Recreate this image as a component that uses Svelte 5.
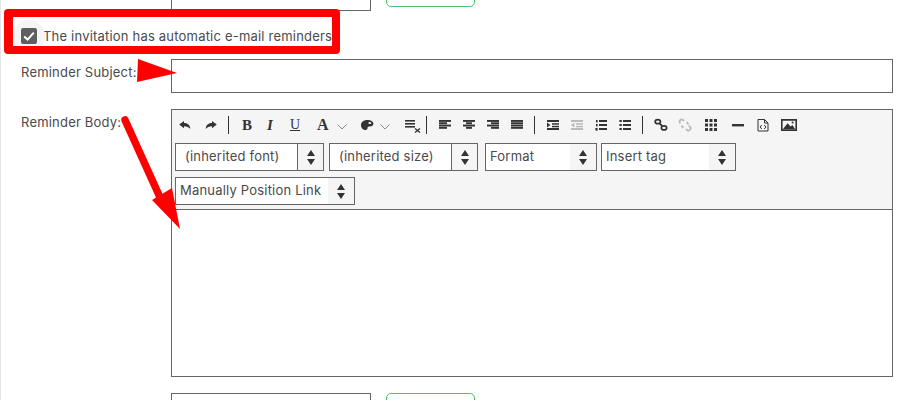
<script>
  const alignLeft = [[2, 12], [2, 8], [2, 12], [2, 8]];
  const alignCenter = [[2, 12], [5, 6], [2, 12], [5, 6]];
  const alignRight = [[2, 12], [6, 8], [2, 12], [6, 8]];
  const justify = [[2, 12], [2, 12], [2, 12], [2, 12]];
</script>

{#snippet lines(rows)}
  <svg class="ico" viewBox="0 0 16 16" aria-hidden="true">
    {#each rows as row, i}
      <rect x={row[0]} y={3 + i * 2.3} width={row[1]} height="1.9" />
    {/each}
  </svg>
{/snippet}

{#snippet chevron()}
  <svg class="chev" viewBox="0 0 10 6" aria-hidden="true">
    <path d="M0.5 0.5 L5 5 L9.5 0.5" />
  </svg>
{/snippet}

{#snippet spin()}
  <svg class="spin" viewBox="0 0 8 15" aria-hidden="true">
    <path d="M4 0 L8 6 H0 Z M0 9 H8 L4 15 Z" />
  </svg>
{/snippet}

<div class="page">
  <div class="actions actions--top">
    <input class="text text--short" type="text" />
    <button class="save" type="button" aria-label="Save"></button>
  </div>

  <label class="check">
    <span class="check__halo"></span>
    <span class="check__box">
      <svg viewBox="0 0 16 16" aria-hidden="true">
        <path d="M3.2 8.4 L6.6 11.6 L12.8 4.6" />
      </svg>
    </span>
    The invitation has automatic e-mail reminders
  </label>

  <div class="row row--subject">
    <span class="row__label">Reminder Subject:</span>
    <input class="text" type="text" />
  </div>

  <div class="row row--body">
    <span class="row__label">Reminder Body:</span>
    <div class="editor">
      <div class="editor__tools">
        <div class="bar">
          <span class="btn">
            <svg class="ico" viewBox="0 0 16 16" aria-hidden="true"><path d="M2.2 7.5 L7 4 V6 C11 6 13.2 8.5 13.2 12 C11.6 10 10 9.2 7 9.2 V11.2 Z" /></svg>
          </span>
          <span class="btn btn--next">
            <svg class="ico" viewBox="0 0 16 16" aria-hidden="true"><path d="M13.8 7.5 L9 4 V6 C5 6 2.8 8.5 2.8 12 C4.4 10 6 9.2 9 9.2 V11.2 Z" /></svg>
          </span>
          <span class="sep"></span>
          <span class="btn glyph glyph--b">B</span>
          <span class="btn glyph glyph--i">I</span>
          <span class="btn glyph glyph--u">U</span>
          <span class="btn btn--wide btn--split glyph glyph--a">A{@render chevron()}</span>
          <span class="btn btn--wide btn--split btn--palette">
            <svg class="ico" viewBox="0 0 16 16" aria-hidden="true">
              <path d="M8.2 3 C4.6 3 2 5.2 2 8.2 C2 11 4.2 13 6.6 13 C8.4 13 8.6 11.6 8.6 10.6 C8.6 9.6 9.6 9.4 11 9.4 C13 9.4 14.4 8.4 14.4 6.8 C14.4 4.4 11.6 3 8.2 3 Z" />
              <ellipse cx="10.8" cy="6" rx="1.5" ry="1.1" fill="#f5f5f5" />
            </svg>
            {@render chevron()}
          </span>
          <span class="btn btn--clear">
            <svg class="ico" viewBox="0 0 16 16" aria-hidden="true">
              <rect x="4" y="3" width="10" height="1.6" />
              <rect x="4" y="6" width="10" height="1.6" />
              <rect x="4" y="9" width="10" height="1.6" />
              <path class="stroke" d="M14 11.5 L19 15.5 M19 11.5 L14 15.5" />
            </svg>
          </span>
          <span class="sep"></span>
          <span class="btn">{@render lines(alignLeft)}</span>
          <span class="btn">{@render lines(alignCenter)}</span>
          <span class="btn">{@render lines(alignRight)}</span>
          <span class="btn">{@render lines(justify)}</span>
          <span class="sep"></span>
          <span class="btn">
            <svg class="ico" viewBox="0 0 16 16" aria-hidden="true">
              <rect x="2" y="3" width="12" height="2" />
              <rect x="7" y="6.2" width="7" height="1.5" />
              <rect x="7" y="8.8" width="7" height="1.5" />
              <rect x="2" y="11" width="12" height="2" />
              <path d="M2 5.6 L5.4 8 L2 10.4 Z" />
            </svg>
          </span>
          <span class="btn btn--off">
            <svg class="ico" viewBox="0 0 16 16" aria-hidden="true">
              <rect x="2" y="3" width="12" height="2" />
              <rect x="7" y="6.2" width="7" height="1.5" />
              <rect x="7" y="8.8" width="7" height="1.5" />
              <rect x="2" y="11" width="12" height="2" />
              <path d="M5.4 5.6 L2 8 L5.4 10.4 Z" />
            </svg>
          </span>
          <span class="btn">
            <svg class="ico" viewBox="0 0 16 16" aria-hidden="true">
              <rect x="6" y="3" width="8" height="2" />
              <rect x="6" y="7" width="8" height="2" />
              <rect x="6" y="11" width="8" height="2" />
              <rect x="3" y="3" width="1.6" height="2.4" />
              <rect x="3" y="7" width="1.6" height="2.4" />
              <rect x="2.4" y="11" width="2.2" height="2.6" />
            </svg>
          </span>
          <span class="btn">
            <svg class="ico" viewBox="0 0 16 16" aria-hidden="true">
              <rect x="6" y="3" width="8" height="2" />
              <rect x="6" y="7" width="8" height="2" />
              <rect x="6" y="11" width="8" height="2" />
              <rect x="2.4" y="3" width="2.4" height="2" />
              <rect x="2.4" y="7" width="2.4" height="2" />
              <rect x="2.4" y="11" width="2.4" height="2" />
            </svg>
          </span>
          <span class="sep"></span>
          <span class="btn">
            <svg class="ico" viewBox="0 0 16 16" aria-hidden="true">
              <path class="stroke stroke--thick" d="M4.8 2.8 A2 2 0 1 0 4.8 6.6 A2 2 0 1 0 4.8 2.8 Z M11 9 A2 2 0 1 0 11 12.8 A2 2 0 1 0 11 9 Z M6.4 6.2 L9.4 9.4" />
            </svg>
          </span>
          <span class="btn btn--off">
            <svg class="ico" viewBox="0 0 16 16" aria-hidden="true">
              <path class="stroke stroke--thick" d="M3.4 6.4 A2 2 0 0 1 6 3 L7 4 M9 12 L10 13 A2 2 0 0 0 12.8 9.6 L11.6 8.6 M4.4 8.6 L6.4 10.8 M9.6 5.2 L11.6 7.4" />
            </svg>
          </span>
          <span class="btn btn--table">
            <svg class="ico" viewBox="0 0 16 16" aria-hidden="true">
              <path d="M2 2 h3 v3 h-3 Z M6.5 2 h3 v3 h-3 Z M11 2 h3 v3 h-3 Z M2 6.5 h3 v3 h-3 Z M6.5 6.5 h3 v3 h-3 Z M11 6.5 h3 v3 h-3 Z M2 11 h3 v3 h-3 Z M6.5 11 h3 v3 h-3 Z M11 11 h3 v3 h-3 Z" />
            </svg>
          </span>
          <span class="btn btn--hr">
            <svg class="ico" viewBox="0 0 16 16" aria-hidden="true"><rect x="2" y="7" width="12" height="2.4" /></svg>
          </span>
          <span class="btn btn--code">
            <svg class="ico" viewBox="0 0 16 16" aria-hidden="true">
              <path class="stroke stroke--thin" d="M3 2.5 H9.5 L13 6 V14 H3 Z M9.5 2.5 V6 H13 M6.8 8 L5 10 L6.8 12 M9.2 8 L11 10 L9.2 12" />
            </svg>
          </span>
          <span class="btn btn--image">
            <svg class="ico ico--image" viewBox="0 0 18 14" aria-hidden="true">
              <path fill-rule="evenodd" d="M1 1 H17 V13 H1 Z M2.6 2.8 V11.2 H15.4 V2.8 Z" />
              <path d="M3 11 L7.6 5.2 L10.6 8.6 L12.4 7 L15 11 Z" />
              <circle cx="12.6" cy="4.6" r="1" />
            </svg>
          </span>
        </div>

        <div class="selects">
          <div class="sel sel--font">
            <span class="sel__text sel__text--wide">(inherited font)</span>
            <span class="sel__arrows sel__arrows--ruled">{@render spin()}</span>
          </div>
          <div class="sel sel--font">
            <span class="sel__text sel__text--wide">(inherited size)</span>
            <span class="sel__arrows sel__arrows--ruled">{@render spin()}</span>
          </div>
          <div class="sel sel--format">
            <span class="sel__text">Format</span>
            <span class="sel__arrows">{@render spin()}</span>
          </div>
          <div class="sel sel--tag">
            <span class="sel__text">Insert tag</span>
            <span class="sel__arrows">{@render spin()}</span>
          </div>
          <div class="sel sel--link">
            <span class="sel__text">Manually Position Link</span>
            <span class="sel__arrows">{@render spin()}</span>
          </div>
        </div>
      </div>
      <div class="editor__area"></div>
    </div>
  </div>

  <div class="actions actions--bottom">
    <input class="text text--short" type="text" />
    <button class="save" type="button" aria-label="Save"></button>
  </div>

  <!-- hand-drawn annotations over the screenshot -->
  <div class="mark"></div>
  <svg class="arrows" viewBox="0 0 913 400" aria-hidden="true">
    <path d="M138 59 L177 73 L137 82 Z" />
    <path class="arrows__shaft" d="M125 120 L163 204" />
    <path d="M180 229 L152 200 L172 188 Z" />
  </svg>
</div>

<style>
  :global(body) {
    margin: 0;
    background: #fff;
  }

  .page {
    position: relative;
    box-sizing: border-box;
    width: 913px;
    height: 400px;
    overflow: hidden;
    border-left: 1px solid #e4e4e4;
    padding-left: 20px;
    font-family: Inter, "Liberation Sans", sans-serif;
    font-size: 13px;
    letter-spacing: 0.2px;
    color: #4a4a4a;
  }

  .actions {
    display: flex;
    align-items: flex-start;
    gap: 15px;
    margin-left: 150px;
  }

  .actions--top {
    margin-top: -23px;
  }

  .actions--bottom {
    margin-top: 16px;
  }

  .text {
    display: block;
    box-sizing: border-box;
    width: 722px;
    height: 34px;
    margin: 0;
    padding: 0 8px;
    border: 1px solid #666;
    border-radius: 0;
    background: #fff;
  }

  .text--short {
    width: 200px;
  }

  .save {
    box-sizing: border-box;
    width: 89px;
    height: 30px;
    padding: 0;
    border: 1px solid #4fbf6f;
    border-radius: 5px;
    background: #fff;
  }

  .check {
    position: relative;
    display: flex;
    align-items: center;
    gap: 6px;
    height: 16px;
    margin-top: 17px;
  }

  .check__halo {
    position: absolute;
    left: -8px;
    top: -8px;
    width: 32px;
    height: 32px;
    border-radius: 50%;
    background: #f5f5f5;
  }

  .check__box {
    position: relative;
    width: 16px;
    height: 16px;
    border-radius: 2px;
    background: #5f5f5f;
  }

  .check__box svg {
    display: block;
    width: 16px;
    height: 16px;
    fill: none;
    stroke: #fff;
    stroke-width: 2;
  }

  .row {
    display: grid;
    grid-template-columns: 150px 722px;
  }

  .row--subject {
    margin-top: 15px;
  }

  .row--body {
    margin-top: 16px;
  }

  .row__label {
    padding-top: 5px;
  }

  .editor {
    box-sizing: border-box;
    height: 268px;
    border: 1px solid #666;
    display: flex;
    flex-direction: column;
  }

  .editor__tools {
    box-sizing: border-box;
    height: 100px;
    padding: 3px 0 0 3px;
    border-bottom: 1px solid #666;
    background: #f5f5f5;
  }

  .editor__area {
    flex: 1;
    background: #fff;
  }

  .bar {
    display: flex;
    align-items: center;
    height: 24px;
    margin-left: -2px;
    color: #333;
  }

  .btn {
    display: flex;
    flex: none;
    align-items: center;
    justify-content: center;
    width: 24px;
    height: 24px;
  }

  .btn--next {
    margin-left: 2px;
  }

  .btn--wide {
    box-sizing: border-box;
    width: 40px;
    justify-content: space-between;
    padding: 0 4px 0 6px;
  }

  .btn--split {
    margin-left: 4px;
  }

  .btn--palette {
    padding: 0 5px 0 4px;
  }

  .btn--clear {
    margin-left: 2px;
  }

  .btn--off {
    color: #bbb;
  }

  .btn--table {
    margin-left: 2px;
  }

  .btn--hr {
    margin-left: 3px;
  }

  .btn--code {
    margin-left: 1px;
  }

  .btn--image {
    margin-left: 2px;
  }

  .sep {
    flex: none;
    width: 1px;
    height: 18px;
    margin: 0 6px 0 5px;
    background: #333;
  }

  .ico {
    display: block;
    flex: none;
    width: 16px;
    height: 16px;
    overflow: visible;
    fill: currentColor;
  }

  .ico--image {
    width: 18px;
    height: 14px;
  }

  .stroke {
    fill: none;
    stroke: currentColor;
    stroke-width: 1.4;
  }

  .stroke--thick {
    stroke-width: 1.8;
  }

  .stroke--thin {
    stroke-width: 1;
  }

  .glyph {
    font-family: "Liberation Serif", serif;
    font-size: 15px;
    letter-spacing: 0;
    color: #333;
  }

  .glyph--b {
    font-weight: 700;
  }

  .glyph--i {
    margin-left: -1px;
    font-weight: 700;
    font-style: italic;
  }

  .glyph--u {
    margin-left: 1px;
    text-decoration: underline;
    font-size: 14px;
  }

  .glyph--a {
    font-weight: 700;
    font-size: 16px;
  }

  .chev {
    display: block;
    flex: none;
    width: 10px;
    height: 6px;
    margin-top: 3px;
    fill: none;
    stroke: #8a8a9a;
    stroke-width: 1;
  }

  .selects {
    display: flex;
    flex-wrap: wrap;
    gap: 6px 5px;
    margin-top: 6px;
  }

  .sel {
    box-sizing: border-box;
    display: flex;
    justify-content: space-between;
    height: 28px;
    border: 1px solid #666;
    background: #fff;
    line-height: 24px;
  }

  .sel--font {
    width: 149px;
  }

  .sel--format {
    width: 112px;
    margin-left: 2px;
  }

  .sel--tag {
    width: 135px;
    margin-left: -1px;
  }

  .sel--link {
    width: 180px;
  }

  .sel__text {
    padding-left: 4px;
    white-space: nowrap;
  }

  .sel__text--wide {
    padding-left: 9px;
  }

  .sel__arrows {
    display: flex;
    flex: none;
    align-items: center;
    justify-content: center;
    box-sizing: border-box;
    width: 26px;
    background: #f5f5f5;
  }

  .sel__arrows--ruled {
    border-left: 1px solid #666;
  }

  .spin {
    display: block;
    width: 8px;
    height: 15px;
    fill: #333;
  }

  .mark {
    position: absolute;
    left: 3px;
    top: 9px;
    box-sizing: border-box;
    width: 336px;
    height: 45px;
    border: solid #f00;
    border-width: 8px 8px 8px 9px;
    border-radius: 4px;
  }

  .arrows {
    position: absolute;
    left: -1px;
    top: 0;
    width: 913px;
    height: 400px;
    fill: #f00;
    pointer-events: none;
  }

  .arrows__shaft {
    fill: none;
    stroke: #f00;
    stroke-width: 7.5;
    stroke-linecap: round;
  }
</style>
